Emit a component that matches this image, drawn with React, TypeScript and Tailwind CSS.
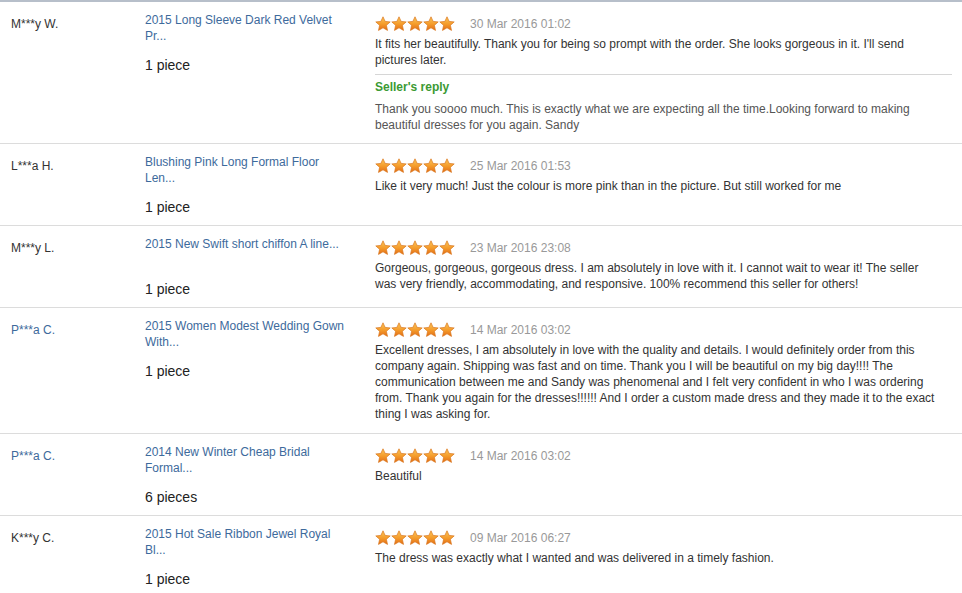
import React from 'react';

type Review = {
  buyer: string;
  buyerLink?: boolean;
  product: string[];
  qty: string;
  date: string;
  text: string[];
  reply?: string[];
};

const reviews: Review[] = [
  {
    buyer: 'M***y W.',
    product: ['2015 Long Sleeve Dark Red Velvet', 'Pr...'],
    qty: '1 piece',
    date: '30 Mar 2016 01:02',
    text: [
      "It fits her beautifully. Thank you for being so prompt with the order. She looks gorgeous in it. I'll send",
      'pictures later.',
    ],
    reply: [
      'Thank you soooo much. This is exactly what we are expecting all the time.Looking forward to making',
      'beautiful dresses for you again. Sandy',
    ],
  },
  {
    buyer: 'L***a H.',
    product: ['Blushing Pink Long Formal Floor', 'Len...'],
    qty: '1 piece',
    date: '25 Mar 2016 01:53',
    text: ['Like it very much! Just the colour is more pink than in the picture. But still worked for me'],
  },
  {
    buyer: 'M***y L.',
    product: ['2015 New Swift short chiffon A line...'],
    qty: '1 piece',
    date: '23 Mar 2016 23:08',
    text: [
      'Gorgeous, gorgeous, gorgeous dress. I am absolutely in love with it. I cannot wait to wear it! The seller',
      'was very friendly, accommodating, and responsive. 100% recommend this seller for others!',
    ],
  },
  {
    buyer: 'P***a C.',
    buyerLink: true,
    product: ['2015 Women Modest Wedding Gown', 'With...'],
    qty: '1 piece',
    date: '14 Mar 2016 03:02',
    text: [
      'Excellent dresses, I am absolutely in love with the quality and details. I would definitely order from this',
      'company again. Shipping was fast and on time. Thank you I will be beautiful on my big day!!!! The',
      'communication between me and Sandy was phenomenal and I felt very confident in who I was ordering',
      'from. Thank you again for the dresses!!!!!! And I order a custom made dress and they made it to the exact',
      'thing I was asking for.',
    ],
  },
  {
    buyer: 'P***a C.',
    buyerLink: true,
    product: ['2014 New Winter Cheap Bridal', 'Formal...'],
    qty: '6 pieces',
    date: '14 Mar 2016 03:02',
    text: ['Beautiful'],
  },
  {
    buyer: 'K***y C.',
    product: ['2015 Hot Sale Ribbon Jewel Royal', 'Bl...'],
    qty: '1 piece',
    date: '09 Mar 2016 06:27',
    text: ['The dress was exactly what I wanted and was delivered in a timely fashion.'],
  },
];

const Star = ({ id }: { id: string }) => (
  <svg width="16" height="16" viewBox="0 0 16 16">
    <defs>
      <linearGradient id={id} x1="0" y1="0" x2="0" y2="1">
        <stop offset="0" stopColor="#fcc75a" />
        <stop offset="0.55" stopColor="#f49a2a" />
        <stop offset="1" stopColor="#e26c16" />
      </linearGradient>
    </defs>
    <path
      d="M8 0.8 L10.1 5.4 L15.2 5.9 L11.4 9.3 L12.5 14.4 L8 11.8 L3.5 14.4 L4.6 9.3 L0.8 5.9 L5.9 5.4 Z"
      fill={`url(#${id})`}
      stroke="#d9761c"
      strokeWidth="0.7"
      strokeLinejoin="round"
    />
  </svg>
);

const Stars = ({ row }: { row: number }) => (
  <div className="flex">
    {[0, 1, 2, 3, 4].map((i) => (
      <Star key={i} id={`st-${row}-${i}`} />
    ))}
  </div>
);

const Lines = ({ lines }: { lines: string[] }) => (
  <>
    {lines.map((l, i) => (
      <div key={i} className="whitespace-nowrap">
        {l}
      </div>
    ))}
  </>
);

export default function App() {
  return (
    <div className="w-[962px] h-[593px] overflow-hidden bg-white font-['Liberation_Sans',Arial,sans-serif]">
      {/* top rule */}
      <div className="h-[2px] bg-[#b7bfca]"></div>

      {reviews.map((r, idx) => (
        <div key={idx} className="flex border-b border-[#dcdcdc] pt-[10px] pb-2">
          {/* buyer */}
          <div className="w-[145px] shrink-0 pl-[11px] pt-1">
            <div className={`text-xs leading-4 ${r.buyerLink ? 'text-[#3d6a9c]' : 'text-[#333]'}`}>{r.buyer}</div>
          </div>

          {/* product */}
          <div className="w-[230px] shrink-0">
            <div className="h-8 text-xs leading-4 text-[#3d6a9c]">
              <Lines lines={r.product} />
            </div>
            <div className="mt-[11px] text-sm leading-5 text-[#222]">{r.qty}</div>
          </div>

          {/* feedback */}
          <div className="flex-1 pr-[10px]">
            <div className="flex h-6 items-center">
              <Stars row={idx} />
              <span className="ml-[15px] text-xs text-[#999]">{r.date}</span>
            </div>
            <div className="text-xs leading-4 text-[#333] mb-[3px]">
              <Lines lines={r.text} />
            </div>
            {r.reply && (
              <div className="mt-[6px] mb-[2px] border-t border-[#d6d6d6] pt-1">
                <div className="text-xs font-bold leading-4 text-[#3b9a33]">Seller's reply</div>
                <div className="mt-[6px] text-xs leading-4 text-[#555]">
                  <Lines lines={r.reply} />
                </div>
              </div>
            )}
          </div>
        </div>
      ))}
    </div>
  );
}
